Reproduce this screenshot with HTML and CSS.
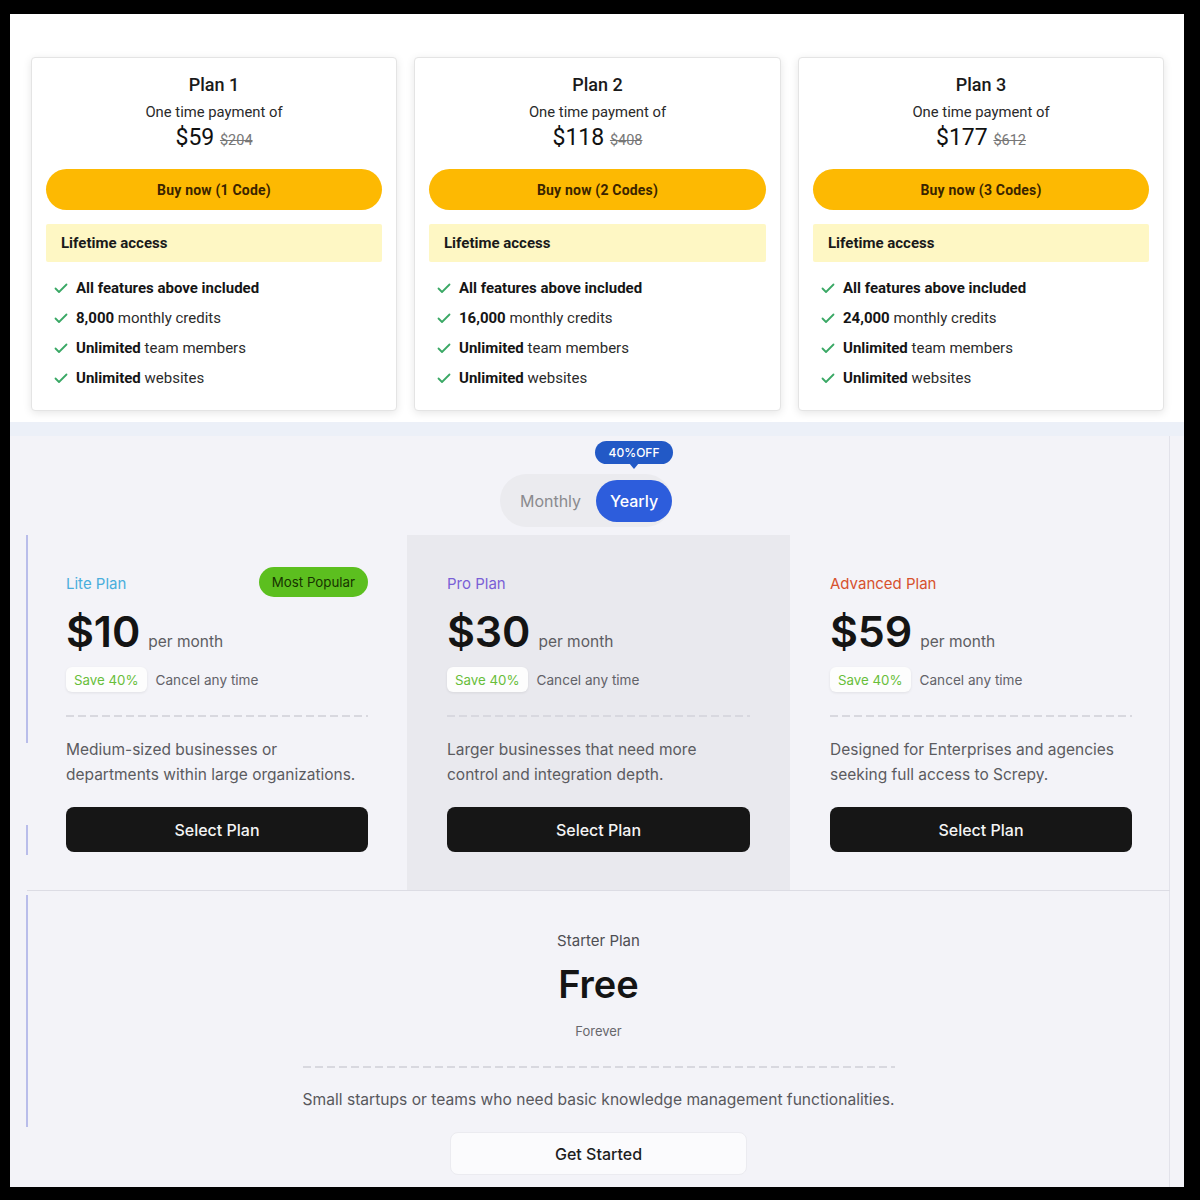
FILE: index.html
```html
<!DOCTYPE html>
<html lang="en">
<head>
<meta charset="utf-8">
<title>Pricing</title>
<link rel="stylesheet" href="styles.css">
</head>
<body>
<div class="frame">
  <section class="ltd">
    <div class="ltd-grid">
      <div class="ltd-card">
        <h2 class="ltd-title">Plan 1</h2>
        <p class="ltd-sub">One time payment of</p>
        <p class="ltd-price">$59 <s class="ltd-old">$204</s></p>
        <button class="buy">Buy now (1 Code)</button>
        <div class="lifetime">Lifetime access</div>
        <ul class="feats">
          <li><svg class="chk" viewBox="0 0 14 14"><path d="M1.5 7.5 L5 11 L12.5 3.5"/></svg><span><b>All features above included</b></span></li>
          <li><svg class="chk" viewBox="0 0 14 14"><path d="M1.5 7.5 L5 11 L12.5 3.5"/></svg><span><b>8,000</b> monthly credits</span></li>
          <li><svg class="chk" viewBox="0 0 14 14"><path d="M1.5 7.5 L5 11 L12.5 3.5"/></svg><span><b>Unlimited</b> team members</span></li>
          <li><svg class="chk" viewBox="0 0 14 14"><path d="M1.5 7.5 L5 11 L12.5 3.5"/></svg><span><b>Unlimited</b> websites</span></li>
        </ul>
      </div>
      <div class="ltd-card">
        <h2 class="ltd-title">Plan 2</h2>
        <p class="ltd-sub">One time payment of</p>
        <p class="ltd-price">$118 <s class="ltd-old">$408</s></p>
        <button class="buy">Buy now (2 Codes)</button>
        <div class="lifetime">Lifetime access</div>
        <ul class="feats">
          <li><svg class="chk" viewBox="0 0 14 14"><path d="M1.5 7.5 L5 11 L12.5 3.5"/></svg><span><b>All features above included</b></span></li>
          <li><svg class="chk" viewBox="0 0 14 14"><path d="M1.5 7.5 L5 11 L12.5 3.5"/></svg><span><b>16,000</b> monthly credits</span></li>
          <li><svg class="chk" viewBox="0 0 14 14"><path d="M1.5 7.5 L5 11 L12.5 3.5"/></svg><span><b>Unlimited</b> team members</span></li>
          <li><svg class="chk" viewBox="0 0 14 14"><path d="M1.5 7.5 L5 11 L12.5 3.5"/></svg><span><b>Unlimited</b> websites</span></li>
        </ul>
      </div>
      <div class="ltd-card">
        <h2 class="ltd-title">Plan 3</h2>
        <p class="ltd-sub">One time payment of</p>
        <p class="ltd-price">$177 <s class="ltd-old">$612</s></p>
        <button class="buy">Buy now (3 Codes)</button>
        <div class="lifetime">Lifetime access</div>
        <ul class="feats">
          <li><svg class="chk" viewBox="0 0 14 14"><path d="M1.5 7.5 L5 11 L12.5 3.5"/></svg><span><b>All features above included</b></span></li>
          <li><svg class="chk" viewBox="0 0 14 14"><path d="M1.5 7.5 L5 11 L12.5 3.5"/></svg><span><b>24,000</b> monthly credits</span></li>
          <li><svg class="chk" viewBox="0 0 14 14"><path d="M1.5 7.5 L5 11 L12.5 3.5"/></svg><span><b>Unlimited</b> team members</span></li>
          <li><svg class="chk" viewBox="0 0 14 14"><path d="M1.5 7.5 L5 11 L12.5 3.5"/></svg><span><b>Unlimited</b> websites</span></li>
        </ul>
      </div>
    </div>
  </section>

  <section class="subs">
    <div class="subs-inner">
      <div class="toggle-row">
        <div class="toggle">
          <span class="opt">Monthly</span>
          <span class="opt active">Yearly<span class="off">40%OFF</span></span>
        </div>
      </div>
      <div class="plans">
        <div class="plan">
          <div class="plan-head">
            <span class="plan-name lite">Lite Plan</span>
            <span class="popular">Most Popular</span>
          </div>
          <div class="plan-price"><span class="amt">$10</span><span class="per">per month</span></div>
          <div class="plan-save"><span class="save">Save 40%</span><span class="cancel">Cancel any time</span></div>
          <div class="dash"></div>
          <p class="plan-desc">Medium-sized businesses or<br>departments within large organizations.</p>
          <button class="select">Select Plan</button>
        </div>
        <div class="plan pro">
          <div class="plan-head">
            <span class="plan-name prop">Pro Plan</span>
          </div>
          <div class="plan-price"><span class="amt">$30</span><span class="per">per month</span></div>
          <div class="plan-save"><span class="save">Save 40%</span><span class="cancel">Cancel any time</span></div>
          <div class="dash"></div>
          <p class="plan-desc">Larger businesses that need more<br>control and integration depth.</p>
          <button class="select">Select Plan</button>
        </div>
        <div class="plan adv">
          <div class="plan-head">
            <span class="plan-name advp">Advanced Plan</span>
          </div>
          <div class="plan-price"><span class="amt">$59</span><span class="per">per month</span></div>
          <div class="plan-save"><span class="save">Save 40%</span><span class="cancel">Cancel any time</span></div>
          <div class="dash"></div>
          <p class="plan-desc">Designed for Enterprises and agencies<br>seeking full access to Screpy.</p>
          <button class="select">Select Plan</button>
        </div>
        <div class="starter">
          <p class="st-name">Starter Plan</p>
          <p class="st-free">Free</p>
          <p class="st-forever">Forever</p>
          <div class="dash st-dash"></div>
          <p class="st-desc">Small startups or teams who need basic knowledge management functionalities.</p>
          <button class="get">Get Started</button>
        </div>
      </div>
    </div>
  </section>
</div>
</body>
</html>
```

FILE: styles.css
```css
* { box-sizing: border-box; }
html, body { margin: 0; padding: 0; }
body {
  background: #000;
  width: 1200px;
  height: 1200px;
  overflow: hidden;
}
.frame {
  margin: 14px 16px 0 10px;
  width: 1174px;
  height: 1173px;
  overflow: hidden;
  background: #fff;
}
p, h2, ul { margin: 0; padding: 0; }
button { font: inherit; border: 0; cursor: pointer; }

/* ---------- Lifetime deal cards ---------- */
.ltd {
  height: 408px;
  background: #fff;
  padding: 43px 20px 0 21px;
  font-family: Roboto, "Liberation Sans", sans-serif;
  color: #1d1d1d;
}
.ltd-grid {
  display: grid;
  grid-template-columns: 366px 367px 366px;
  gap: 17px;
}
.ltd-card {
  height: 354px;
  border: 1px solid #e4e4e4;
  border-radius: 4px;
  box-shadow: 0 2px 8px rgba(0,0,0,0.10);
  padding: 15px 14px 0;
  background: #fff;
  display: flex;
  flex-direction: column;
}
.ltd-title {
  text-align: center;
  font-size: 18px;
  font-weight: 500;
  line-height: 24px;
  color: #1a1a1a;
}
.ltd-sub {
  text-align: center;
  font-size: 14.8px;
  line-height: 20px;
  margin-top: 5px;
  color: #2a2a2a;
}
.ltd-price {
  text-align: center;
  font-size: 23px;
  line-height: 28px;
  margin-top: 2px;
  color: #111;
}
.ltd-old {
  font-size: 14.5px;
  color: #777;
}
.buy {
  margin-top: 14px;
  height: 41px;
  border-radius: 21px;
  background: #fdb902;
  color: #3a2400;
  font-family: Roboto, "Liberation Sans", sans-serif;
  font-weight: 700;
  font-size: 14px;
  letter-spacing: 0.2px;
}
.lifetime {
  margin-top: 14px;
  height: 38px;
  background: #fef7c4;
  border-radius: 2px;
  padding-left: 15px;
  display: flex;
  align-items: center;
  font-weight: 700;
  font-size: 15px;
  color: #1a1a1a;
}
.feats {
  list-style: none;
  padding: 16px 0 0 8px;
  display: flex;
  flex-direction: column;
  gap: 10px;
}
.feats li {
  display: flex;
  align-items: center;
  gap: 8px;
  font-size: 15px;
  line-height: 20px;
  color: #2b2b2b;
}
.feats b { font-weight: 700; color: #151515; }
.chk {
  width: 14px;
  height: 14px;
  flex: none;
}
.chk path {
  fill: none;
  stroke: #3aa865;
  stroke-width: 1.8;
  stroke-linecap: round;
  stroke-linejoin: round;
}

/* ---------- Subscription plans ---------- */
.subs {
  height: 765px;
  background: #f3f3f8;
  border-top: 14px solid #ecf0f8;
  padding: 0 14px 0 17px;
  font-family: Inter, "Noto Sans", sans-serif;
}
.subs-inner {
  height: 100%;
  border-right: 1px solid #e2e2ea;
}
.toggle-row {
  padding-top: 38px;
  display: flex;
  justify-content: center;
  padding-right: 24px;
}
.toggle {
  height: 53px;
  border-radius: 27px;
  background: #ebebef;
  display: flex;
  align-items: center;
  padding-left: 20px;
}
.opt {
  font-size: 16px;
  color: #8a8a8e;
  padding-right: 15px;
}
.opt.active {
  position: relative;
  width: 76px;
  height: 42px;
  border-radius: 21px;
  background: #2d5ddc;
  color: #fff;
  font-weight: 500;
  display: flex;
  align-items: center;
  justify-content: center;
  padding: 0;
}
.off {
  position: absolute;
  left: -1px;
  bottom: 58px;
  width: 78px;
  height: 23px;
  border-radius: 12px;
  background: #2259c6;
  color: #fff;
  font-size: 12px;
  font-weight: 500;
  display: flex;
  align-items: center;
  justify-content: center;
}
.off::after {
  content: "";
  position: absolute;
  left: 50%;
  bottom: -5px;
  margin-left: -5px;
  border-left: 5px solid transparent;
  border-right: 5px solid transparent;
  border-top: 6px solid #2259c6;
}

.plans {
  position: relative;
  margin-top: 8px;
  display: grid;
  grid-template-columns: 380px 383px 380px;
}
.plans::before {
  content: "";
  position: absolute;
  left: -1px;
  top: 0;
  width: 2px;
  height: 592px;
  background: linear-gradient(to bottom,
    #b9bdea 0, #b9bdea 208px,
    transparent 208px, transparent 290px,
    #b9bdea 290px, #b9bdea 320px,
    transparent 320px, transparent 360px,
    #b9bdea 360px, #b9bdea 592px);
}
.plan {
  height: 355px;
  padding: 32px 39px 0 39px;
}
.plan.pro {
  background: #e9e9ee;
  padding-left: 40px;
  padding-right: 40px;
}
.plan.adv {
  padding-left: 40px;
  padding-right: 38px;
}
.plan-head {
  height: 30px;
  display: flex;
  align-items: center;
  justify-content: space-between;
}
.plan-name {
  font-size: 15px;
  line-height: 22px;
  padding-top: 4px;
}
.lite { color: #4aaedc; }
.prop { color: #7a5fd6; }
.advp { color: #d7512e; }
.popular {
  height: 30px;
  padding: 0 13px;
  border-radius: 15px;
  background: #5cbf1f;
  color: #173300;
  font-size: 13.3px;
  display: flex;
  align-items: center;
}
.plan-price {
  margin-top: 10px;
  height: 48px;
  display: flex;
  align-items: baseline;
  gap: 8px;
}
.amt {
  font-size: 43px;
  line-height: 48px;
  font-weight: 600;
  color: #141414;
  letter-spacing: -0.1px;
}
.per {
  font-size: 15.5px;
  color: #5d5d62;
}
.plan-save {
  margin-top: 12px;
  display: flex;
  align-items: center;
  gap: 9px;
}
.save {
  height: 25px;
  padding: 0 8px;
  border-radius: 6px;
  background: #fdfdfd;
  box-shadow: 0 1px 3px rgba(0,0,0,0.08);
  color: #68be3a;
  font-size: 13.3px;
  display: flex;
  align-items: center;
}
.cancel {
  font-size: 13.6px;
  color: #626268;
}
.dash {
  margin-top: 23px;
  height: 2px;
  background-image: linear-gradient(to right, #d8d8df 0, #d8d8df 8px, transparent 8px);
  background-size: 12px 2px;
  background-repeat: repeat-x;
}
.plan-desc {
  margin-top: 20px;
  font-size: 15.5px;
  line-height: 25px;
  color: #5b5b60;
  white-space: nowrap;
}
.select {
  margin-top: 20px;
  width: 100%;
  height: 45px;
  border-radius: 8px;
  background: #161616;
  color: #f4f4f4;
  font-family: Inter, "Noto Sans", sans-serif;
  font-size: 16px;
  font-weight: 500;
}

.starter {
  grid-column: 1 / 4;
  border-top: 1px solid #dcdce4;
  display: flex;
  flex-direction: column;
  align-items: center;
  padding-top: 40px;
}
.st-name {
  font-size: 15px;
  line-height: 20px;
  color: #4e4e53;
}
.st-free {
  margin-top: 10px;
  font-size: 38px;
  line-height: 46px;
  font-weight: 600;
  color: #141414;
}
.st-forever {
  margin-top: 15px;
  font-size: 13px;
  line-height: 18px;
  color: #67676c;
}
.st-dash {
  width: 592px;
  margin-top: 26px;
}
.st-desc {
  margin-top: 21px;
  font-size: 15.6px;
  line-height: 22px;
  color: #58585d;
  white-space: nowrap;
}
.get {
  margin-top: 21px;
  width: 297px;
  height: 43px;
  border-radius: 8px;
  background: #fbfbfd;
  border: 1px solid #ebebf0;
  color: #1e1e1e;
  font-family: Inter, "Noto Sans", sans-serif;
  font-size: 16px;
  font-weight: 500;
}
```
